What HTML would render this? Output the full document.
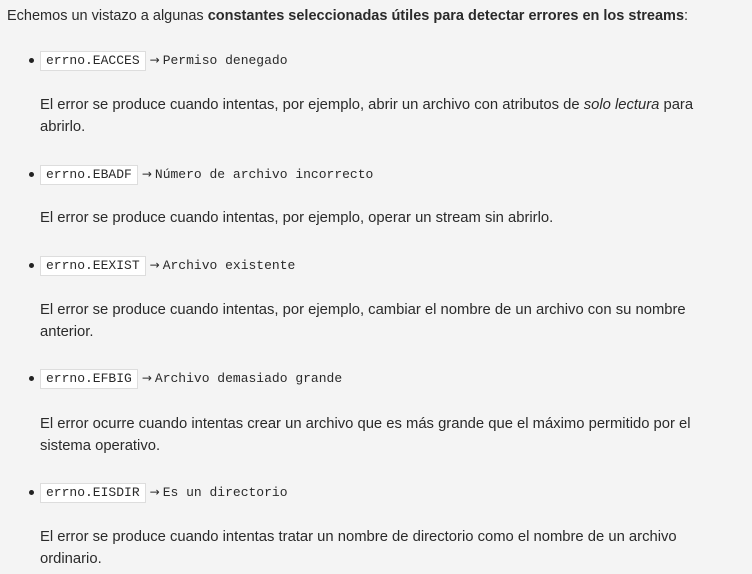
<!DOCTYPE html>
<html><head><meta charset="utf-8"><style>
html,body{margin:0;padding:0;background:#f4f4f4;width:752px;height:574px;overflow:hidden}
body{font-family:"Liberation Sans",sans-serif;font-size:14.8px;color:#2a2a2a;position:relative}
.a{position:absolute;line-height:22px;white-space:nowrap}
.m{font-family:"Liberation Mono",monospace;font-size:13px}
.c{display:inline-block;background:#fff;border:1px solid #ddd;padding:0 5px;line-height:18px;margin-right:4px}
.ar{font-family:"DejaVu Sans",sans-serif;font-size:12px;margin-right:3px}
.dot{position:absolute;width:5px;height:5px;border-radius:50%;background:#222}
</style></head><body>
<div class="a" style="left:7px;top:5px;font-size:14.5px">Echemos un vistazo a algunas <b>constantes seleccionadas útiles para detectar errores en los streams</b>:</div>

<div class="dot" style="left:29px;top:58px"></div>
<div class="a m" style="left:40px;top:49px"><span class="c">errno.EACCES</span><span class="ar">→</span>Permiso denegado</div>
<div class="a" style="left:40px;top:94px">El error se produce cuando intentas, por ejemplo, abrir un archivo con atributos de <i>solo lectura</i> para</div>
<div class="a" style="left:40px;top:116px">abrirlo.</div>

<div class="dot" style="left:29px;top:172px"></div>
<div class="a m" style="left:40px;top:163px"><span class="c">errno.EBADF</span><span class="ar">→</span>Número de archivo incorrecto</div>
<div class="a" style="left:40px;top:207px">El error se produce cuando intentas, por ejemplo, operar un stream sin abrirlo.</div>

<div class="dot" style="left:29px;top:263px"></div>
<div class="a m" style="left:40px;top:254px"><span class="c">errno.EEXIST</span><span class="ar">→</span>Archivo existente</div>
<div class="a" style="left:40px;top:299px">El error se produce cuando intentas, por ejemplo, cambiar el nombre de un archivo con su nombre</div>
<div class="a" style="left:40px;top:321px">anterior.</div>

<div class="dot" style="left:29px;top:376px"></div>
<div class="a m" style="left:40px;top:367px"><span class="c">errno.EFBIG</span><span class="ar">→</span>Archivo demasiado grande</div>
<div class="a" style="left:40px;top:413px">El error ocurre cuando intentas crear un archivo que es más grande que el máximo permitido por el</div>
<div class="a" style="left:40px;top:435px">sistema operativo.</div>

<div class="dot" style="left:29px;top:490px"></div>
<div class="a m" style="left:40px;top:481px"><span class="c">errno.EISDIR</span><span class="ar">→</span>Es un directorio</div>
<div class="a" style="left:40px;top:526px">El error se produce cuando intentas tratar un nombre de directorio como el nombre de un archivo</div>
<div class="a" style="left:40px;top:548px">ordinario.</div>
</body></html>
